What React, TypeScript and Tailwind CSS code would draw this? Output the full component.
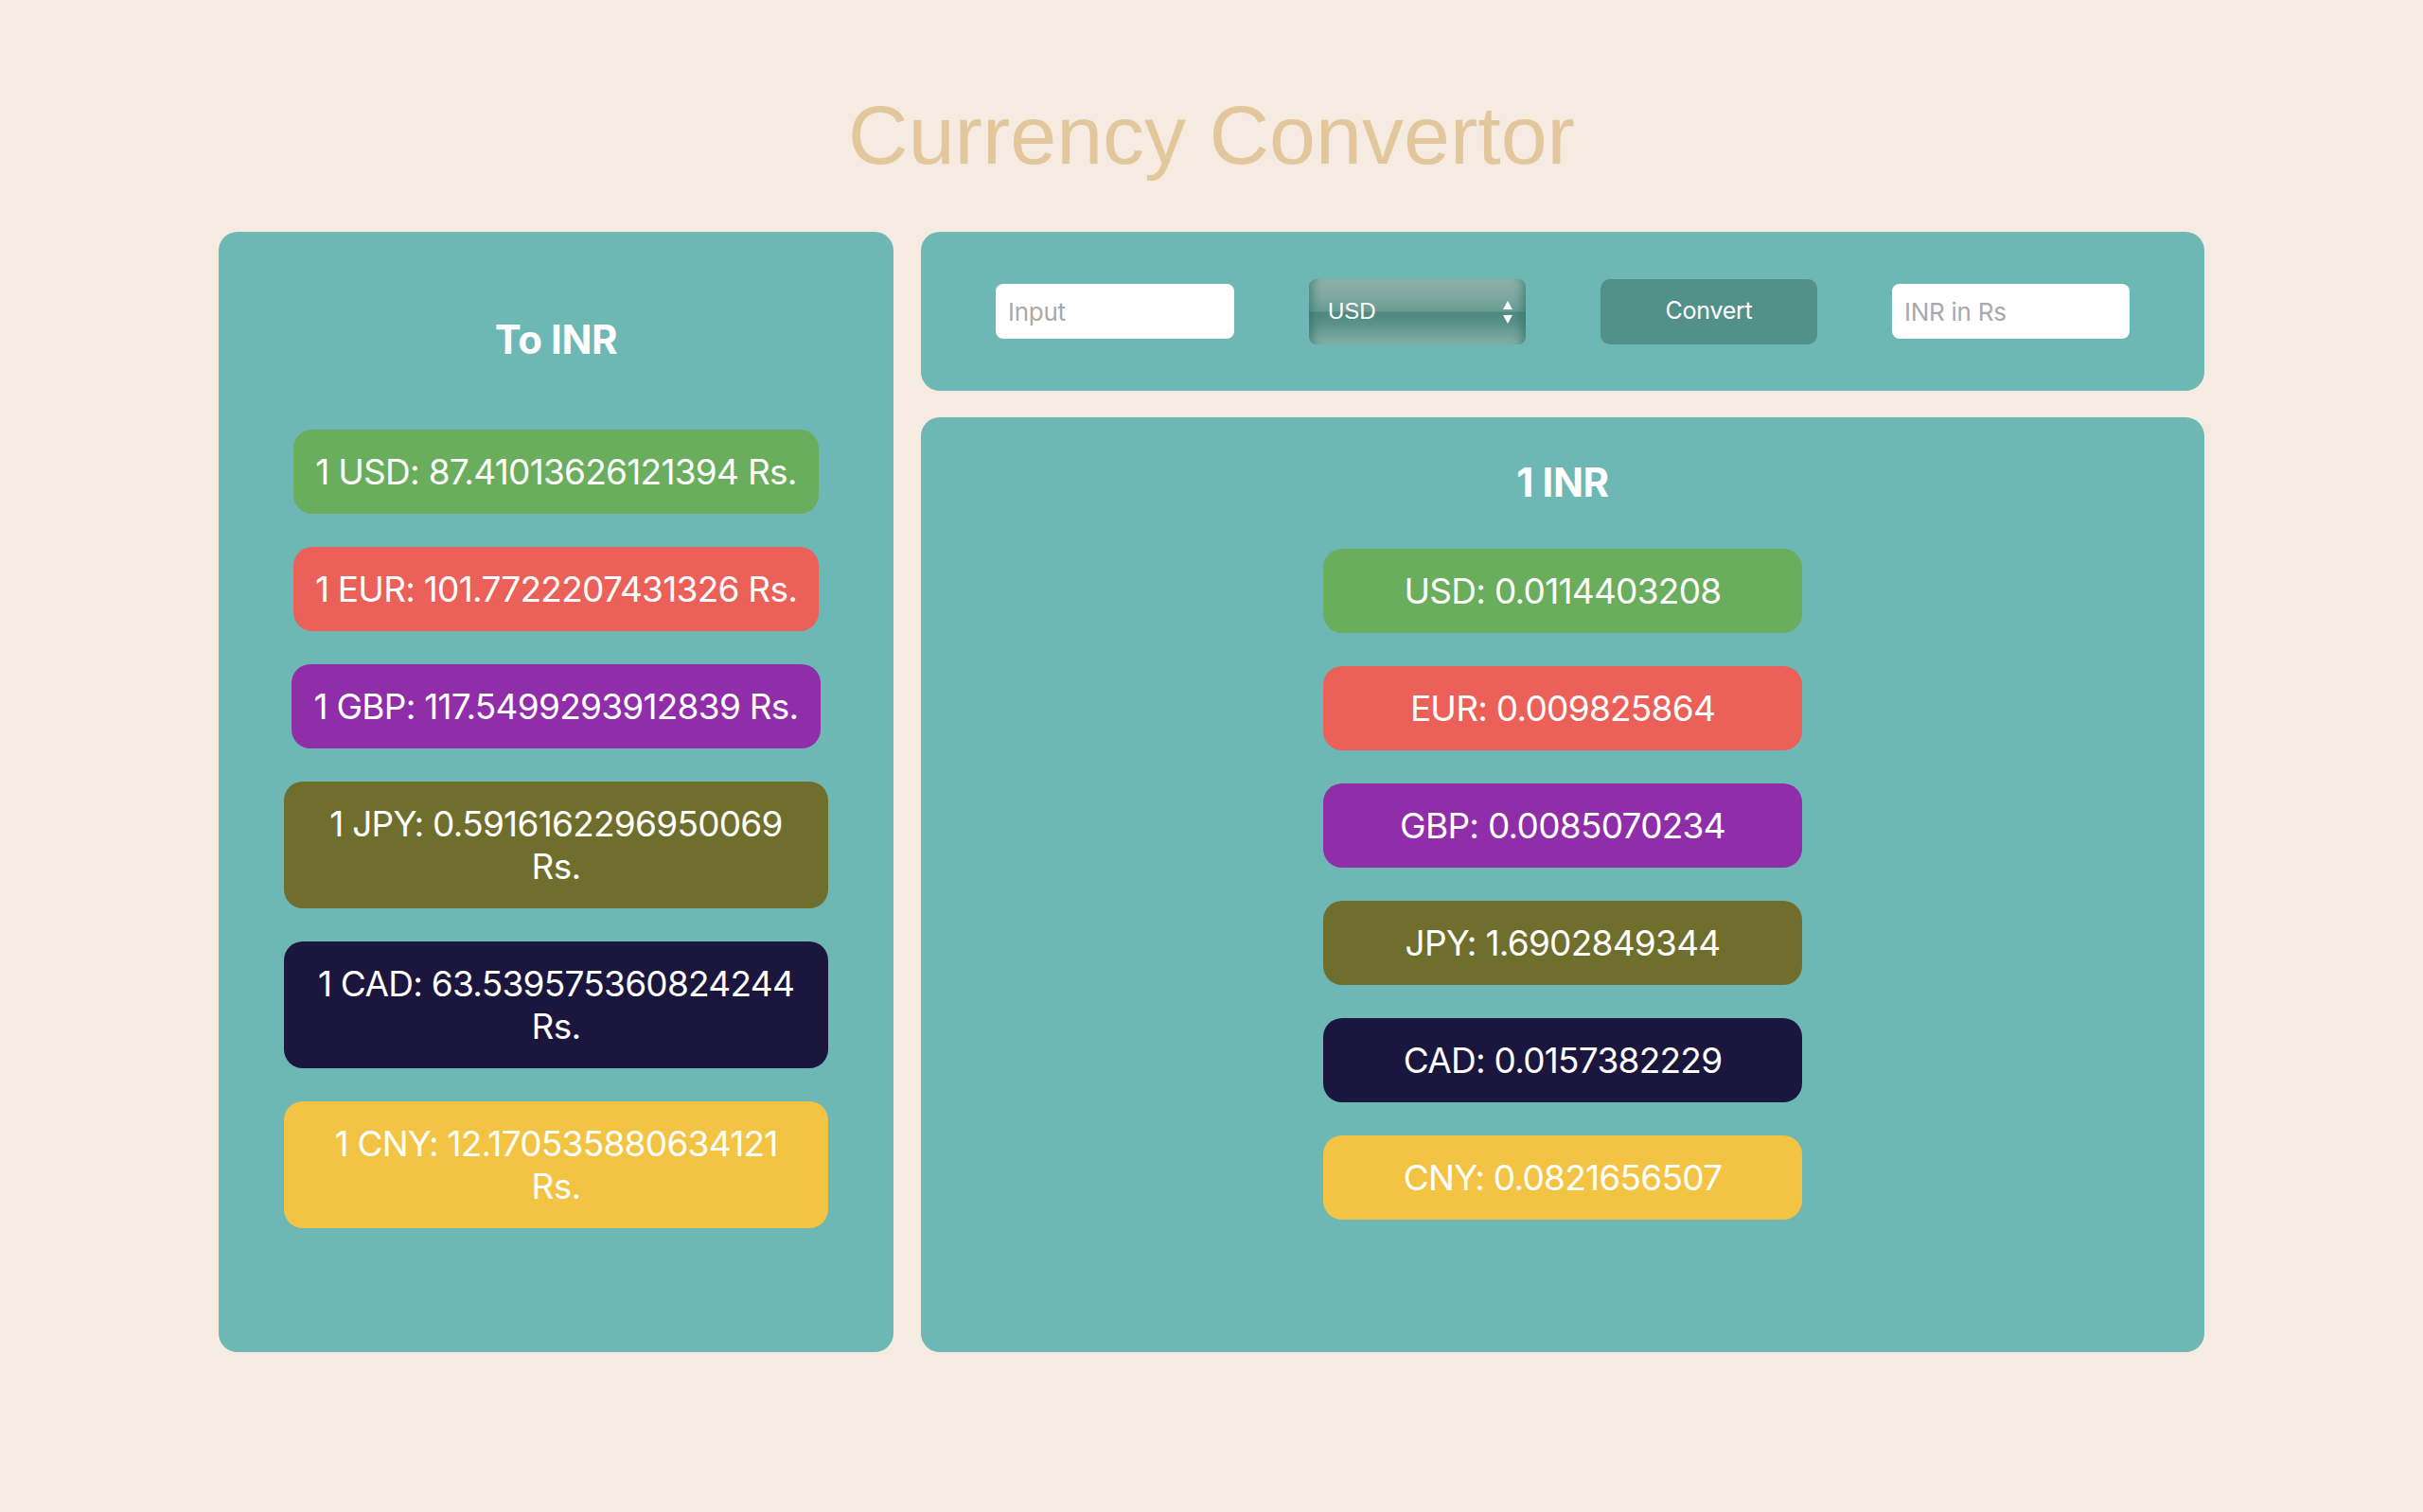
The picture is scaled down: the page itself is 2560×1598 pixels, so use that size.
import React from "react";

const toInr = [
  { main: "1 USD: 87.41013626121394", color: "bg-[#69ad5d]", wrap: false },
  { main: "1 EUR: 101.7722207431326", color: "bg-[#ec605a]", wrap: false },
  { main: "1 GBP: 117.5499293912839", color: "bg-[#8f2ea8]", wrap: false },
  { main: "1 JPY: 0.5916162296950069", color: "bg-[#706e2d]", wrap: true },
  { main: "1 CAD: 63.539575360824244", color: "bg-[#1a163e]", wrap: true },
  { main: "1 CNY: 12.170535880634121", color: "bg-[#f3c444]", wrap: true },
];

const fromInr = [
  { label: "USD: 0.0114403208", color: "bg-[#69ad5d]" },
  { label: "EUR: 0.009825864", color: "bg-[#ec605a]" },
  { label: "GBP: 0.0085070234", color: "bg-[#8f2ea8]" },
  { label: "JPY: 1.6902849344", color: "bg-[#706e2d]" },
  { label: "CAD: 0.0157382229", color: "bg-[#1a163e]" },
  { label: "CNY: 0.0821656507", color: "bg-[#f3c444]" },
];

export default function App() {
  return (
    <div className="min-h-screen bg-[#f5ebe0] font-['Inter',sans-serif]">
      <h1 className="pt-[99px] text-center font-['Liberation_Sans',Arial,sans-serif] text-[88px] font-normal leading-none text-[#e2c79c]">
        Currency Convertor
      </h1>

      <div className="mx-[231px] mt-[58px] flex h-[1184px] gap-[29px]">
        {/* Left panel */}
        <div className="flex w-[713px] flex-col items-center rounded-[20px] bg-[#6db7b5] pt-[88px]">
          <h2 className="text-[42px] font-bold leading-[52px] tracking-[-0.01em] text-white">To INR</h2>
          <div className="mt-[69px] flex flex-col items-center gap-[35px]">
            {toInr.map((c) =>
              c.wrap ? (
                <div
                  key={c.main}
                  className={`w-[575px] rounded-[20px] px-[23px] py-[22px] text-center text-[37px] leading-[45px] tracking-[-0.02em] text-white ${c.color}`}
                >
                  {c.main}
                  <br />
                  Rs.
                </div>
              ) : (
                <div
                  key={c.main}
                  className={`whitespace-nowrap rounded-[20px] px-[23px] py-[22px] text-center text-[37px] leading-[45px] tracking-[-0.02em] text-white ${c.color}`}
                >
                  {c.main} Rs.
                </div>
              )
            )}
          </div>
        </div>

        {/* Right column */}
        <div className="flex flex-1 flex-col gap-[28px]">
          <div className="flex h-[168px] items-center justify-evenly rounded-[20px] bg-[#6db7b5]">
            <input
              placeholder="Input"
              className="h-[58px] w-[252px] rounded-[8px] bg-white pl-[13px] text-[26px] tracking-[-0.01em] text-black outline-none placeholder:text-[#a9a9a9]"
            />
            <div className="relative h-[69px] w-[229px]">
              <select className="h-full w-full appearance-none rounded-[8px] bg-[linear-gradient(to_bottom,#8fb1a9_0%,#7aa69e_30%,#6a9c94_49%,#4c897f_51%,#5a938a_70%,#86b0a8_100%)] pl-[20px] font-['Liberation_Sans',Arial,sans-serif] text-[24px] text-white shadow-[inset_12px_0_8px_-8px_rgba(40,105,95,0.55),inset_-12px_0_8px_-8px_rgba(40,105,95,0.55)] outline-none">
                <option>USD</option>
                <option>EUR</option>
                <option>GBP</option>
                <option>JPY</option>
                <option>CAD</option>
                <option>CNY</option>
              </select>
              <svg
                className="pointer-events-none absolute right-[13px] top-[22px]"
                width="12"
                height="26"
                viewBox="0 0 12 26"
              >
                <path d="M6 1 L11 10 L1 10 Z" fill="white" />
                <path d="M1 16 L11 16 L6 25 Z" fill="white" />
              </svg>
            </div>
            <button className="h-[69px] w-[229px] rounded-[10px] bg-[#52918a] text-[25px] tracking-[-0.01em] text-white">
              Convert
            </button>
            <input
              placeholder="INR in Rs"
              className="h-[58px] w-[251px] rounded-[8px] bg-white pl-[13px] text-[26px] tracking-[-0.01em] text-black outline-none placeholder:text-[#a9a9a9]"
            />
          </div>

          <div className="flex flex-1 flex-col items-center rounded-[20px] bg-[#6db7b5] pt-[43px]">
            <h2 className="text-[42px] font-bold leading-[52px] tracking-[-0.01em] text-white">1 INR</h2>
            <div className="mt-[44px] flex flex-col gap-[35px]">
              {fromInr.map((c) => (
                <div
                  key={c.label}
                  className={`w-[506px] rounded-[20px] py-[22px] text-center text-[37px] leading-[45px] tracking-[-0.02em] text-white ${c.color}`}
                >
                  {c.label}
                </div>
              ))}
            </div>
          </div>
        </div>
      </div>
    </div>
  );
}
